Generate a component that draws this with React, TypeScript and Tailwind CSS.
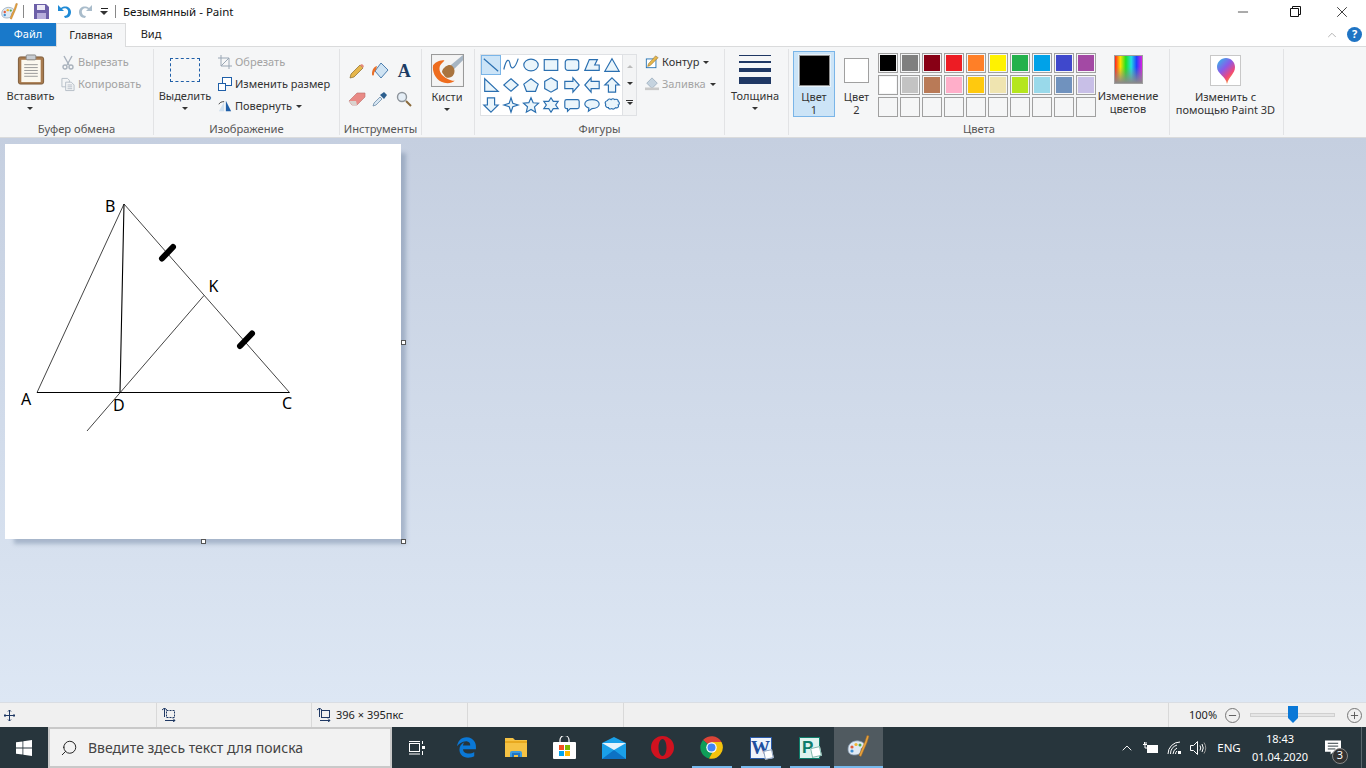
import React from 'react';
import { FaEdgeLegacy } from 'react-icons/fa6';
import { ChevronUp, Minus, Plus, Search, X } from 'lucide-react';

const Caret = ({ className = '' }: { className?: string }) => (
  <span className={`inline-block h-0 w-0 border-x-[3px] border-t-[3px] border-x-transparent border-t-[#333] ${className}`} />
);

const Group = ({ width, label, children }: { width: string; label?: string; children: React.ReactNode }) => (
  <div className={`flex shrink-0 flex-col border-r border-[#e2e3e5] ${width}`}>
    <div className="flex min-h-0 flex-1">{children}</div>
    <div className="h-[17px] text-center text-[11.2px] leading-[22px] text-[#555]">{label}</div>
  </div>
);

const SmallBtn = ({ icon, text, disabled, caret }: { icon: React.ReactNode; text: string; disabled?: boolean; caret?: boolean }) => (
  <div className={`flex h-[22px] items-center gap-[3px] whitespace-nowrap text-[11px] ${disabled ? 'text-[#a3a3a3]' : 'text-[#333]'}`}>
    <span className="flex w-[14px] justify-center">{icon}</span>
    {text}
    {caret && <Caret className="ml-[1px]" />}
  </div>
);

const LargeBtn = ({ lines, caret = true, className = '' }: { lines: string[]; caret?: boolean; className?: string }) => (
  <div className={`flex flex-col items-center text-center text-[11px] leading-[13px] text-[#333] ${className}`}>
    {lines.map(l => (
      <span key={l} className="whitespace-nowrap">{l}</span>
    ))}
    {caret && <Caret className="mt-[5px]" />}
  </div>
);

const PaintIcon = ({ size = 18 }: { size?: number }) => (
  <svg width={size} height={size} viewBox="0 0 24 24">
    <path d="M1 14c0-6 6-9 11-8 5 1 7 4 5 6-2 1-3 1-3 3s-1 5-6 5-7-2-7-6z" fill="#dfe9f3" stroke="#7d93a8" strokeWidth="0.8" />
    <circle cx="5" cy="12" r="1.6" fill="#e25b3c" />
    <circle cx="9" cy="9.5" r="1.6" fill="#f2b632" />
    <circle cx="13" cy="10" r="1.5" fill="#4fa84a" />
    <circle cx="5" cy="16" r="1.6" fill="#3f8fd2" />
    <path d="M22 1l-2-.5-2 6-6 14 2 1 6-14z" fill="#e7a33d" stroke="#a8681e" strokeWidth="0.5" />
  </svg>
);

const shapes: React.ReactNode[] = [
  <path d="M2 3l16 14" />,
  <path d="M2 15C5 2 8 3 9 9s5 7 9-6" fill="none" />,
  <ellipse cx="10" cy="10" rx="8" ry="6.5" />,
  <rect x="2.5" y="4" width="15" height="12" />,
  <rect x="2.5" y="4" width="15" height="12" rx="3" />,
  <path d="M7 4h9l-3 6h5v6H2z" />,
  <path d="M10 3l8 14H2z" />,
  <path d="M3 3l15 14H3z" />,
  <path d="M10 3l8 7-8 7-8-7z" />,
  <path d="M10 3l8 6-3 8H5L2 9z" />,
  <path d="M10 2l7 4v8l-7 4-7-4V6z" />,
  <path d="M2 6h9V2l7 8-7 8v-4H2z" />,
  <path d="M18 6H9V2l-7 8 7 8v-4h9z" />,
  <path d="M10 2l8 8h-4v8H6v-8H2z" />,
  <path d="M10 18l8-8h-4V2H6v8H2z" />,
  <path d="M10 2l2 6 6 2-6 2-2 6-2-6-6-2 6-2z" />,
  <path d="M10 2l2.4 5.5 6 .6-4.5 4 1.3 6L10 15l-5.2 3 1.3-6-4.5-4 6-.6z" />,
  <path d="M10 2l2.5 4H18l-2.8 4 2.8 4h-5.5L10 18l-2.5-4H2l2.8-4L2 6h5.5z" />,
  <path d="M4 4h12a2 2 0 012 2v6a2 2 0 01-2 2H8l-3 3v-3H4a2 2 0 01-2-2V6a2 2 0 012-2z" />,
  <path d="M10 4c4.5 0 8 2 8 5s-3.5 5-8 5l-4 3 .5-3.5C4 12.5 2 11 2 9c0-3 3.5-5 8-5z" />,
  <path d="M5 5c1-2 3-2 4-1 1-1 3-1 4 0 2-1 4 0 4 2 2 1 1 4 0 4 1 2-1 4-3 3-1 1-3 2-4 1-2 1-4 0-4-1-2 0-4-2-3-4-1-1-1-3 2-4z" />,
];

const colors = [
  ['#000000', '#7f7f7f', '#880015', '#ed1c24', '#ff7f27', '#fff200', '#22b14c', '#00a2e8', '#3f48cc', '#a349a4'],
  ['#ffffff', '#c3c3c3', '#b97a57', '#ffaec9', '#ffc90e', '#efe4b0', '#b5e61d', '#99d9ea', '#7092be', '#c8bfe7'],
  Array(10).fill('#f5f6f7'),
];

const TitleBar = () => (
  <div className="flex h-[23px] items-center bg-white pl-[1px] text-[11.5px] text-[#111]">
    <PaintIcon />
    <span className="ml-[4px] h-[13px] w-px bg-[#888]" />
    <svg className="ml-[10px]" width="15" height="15" viewBox="0 0 15 15">
      <path d="M0 0h12l3 3v12H0z" fill="#6c5fa8" />
      <rect x="3" y="1" width="8" height="5" fill="#ece9f6" />
      <rect x="3" y="9" width="9" height="6" fill="#b7aedb" />
    </svg>
    <svg className="ml-[8px]" width="15" height="15" viewBox="0 0 15 15">
      <path d="M1 1v6h6L5 5c3-2 7 0 6 4-.4 2-2 3-4 3l1 2c4 0 6-3 6-6 0-5-6-7-10-4z" fill="#1f8ad6" />
    </svg>
    <svg className="ml-[6px]" width="15" height="15" viewBox="0 0 15 15">
      <path d="M14 1v6H8l2-2c-3-2-7 0-6 4 .4 2 2 3 4 3l-1 2c-4 0-6-3-6-6 0-5 6-7 10-4z" fill="#a9bccb" />
    </svg>
    <span className="ml-[7px] flex flex-col items-center gap-[2px]">
      <span className="h-px w-[7px] bg-[#222]" />
      <Caret className="border-x-[4px] border-t-[4px] border-t-[#222]" />
    </span>
    <span className="ml-[7px] h-[13px] w-px bg-[#888]" />
    <span className="ml-[7px] pt-[1px]">Безымянный - Paint</span>
    <div className="ml-auto flex items-center">
      <Minus size={16} strokeWidth={1} className="mr-[39px] text-black" />
      <svg className="mr-[32px]" width="11" height="11" viewBox="0 0 11 11" fill="none" stroke="#111">
        <path d="M.5 2.5h8v8h-8zM2.5 2.5v-2h8v8h-2" />
      </svg>
      <X size={18} strokeWidth={1} className="mr-[15px] text-black" />
    </div>
  </div>
);

const Tabs = () => (
  <div className="relative flex h-[23px] items-stretch bg-white text-[11px]">
    <div className="flex w-[56px] items-center justify-center bg-[#1979ca] text-white">Файл</div>
    <div className="z-10 -mb-px flex w-[70px] items-center justify-center border-x border-t border-[#dadbdc] bg-[#f5f6f7] text-[#222]">Главная</div>
    <div className="flex w-[50px] items-center justify-center text-[#222]">Вид</div>
    <div className="ml-auto flex items-center">
      <ChevronUp size={14} strokeWidth={1.5} className="mr-[8px] text-[#a8a8a8]" />
      <span className="mr-[4px] flex h-[15px] w-[15px] items-center justify-center rounded-full bg-[#1f74c4] text-[11px] font-bold text-white">?</span>
    </div>
  </div>
);

const Ribbon = () => (
  <div className="flex h-[92px] border-y border-[#dadbdc] bg-[#f5f6f7] py-[2px]">
    <Group width="w-[154px]" label="Буфер обмена">
      <div className="flex w-[61px] flex-col items-center pt-[5px]">
        <svg width="28" height="31" viewBox="0 0 28 32">
          <rect x="1" y="3" width="26" height="28" rx="2" fill="#a87b4f" stroke="#7d5a38" />
          <rect x="4" y="6" width="20" height="23" fill="#fbf8ef" />
          <path d="M7 11h14M7 14h14M7 17h14M7 20h14M7 23h14" stroke="#999" />
          <rect x="9" y="1" width="10" height="5" rx="1" fill="#c7ccd2" stroke="#888" />
        </svg>
        <LargeBtn lines={['Вставить']} className="mt-[4px]" />
      </div>
      <div className="pt-[2px]">
        <SmallBtn
          disabled
          text="Вырезать"
          icon={
            <svg width="12" height="15" viewBox="0 0 12 15" fill="none" stroke="#a9b2bd" strokeWidth="1.4">
              <path d="M2 1l5 9M10 1L5 10" />
              <circle cx="3" cy="12" r="2" />
              <circle cx="9" cy="12" r="2" />
            </svg>
          }
        />
        <SmallBtn
          disabled
          text="Копировать"
          icon={
            <svg width="15" height="15" viewBox="0 0 15 15" fill="#f4f5f6" stroke="#b4bcc6">
              <path d="M1 1h6l2 2v7H1z" />
              <path d="M5 5h6l3 3v6H5z" />
              <path d="M7 8h5M7 10h5M7 12h5" />
            </svg>
          }
        />
      </div>
    </Group>
    <Group width="w-[186px]" label="Изображение">
      <div className="flex w-[62px] flex-col items-center pt-[9px]">
        <div className="h-[24px] w-[30px] border border-dashed border-[#1f5fa8]" />
        <LargeBtn lines={['Выделить']} className="mt-[7px]" />
      </div>
      <div className="pl-[2px] pt-[2px]">
        <SmallBtn
          disabled
          text="Обрезать"
          icon={
            <svg width="14" height="14" viewBox="0 0 14 14" fill="none" stroke="#9aa7b5">
              <path d="M3 0v11h11M0 3h11v11M3 11L11 3" />
            </svg>
          }
        />
        <SmallBtn
          text="Изменить размер"
          icon={
            <svg width="14" height="14" viewBox="0 0 14 14" fill="#fff" stroke="#1f5fa8">
              <rect x="4.5" y=".5" width="9" height="8" />
              <rect x=".5" y="6.5" width="7" height="7" />
            </svg>
          }
        />
        <SmallBtn
          caret
          text="Повернуть"
          icon={
            <svg width="16" height="14" viewBox="0 0 16 14">
              <path d="M9 1l6 12H9z" fill="#1f5fa8" />
              <path d="M1 13L7 2v11z" fill="#cfe0ef" />
              <path d="M1 5c1-2 3-3 6-3" fill="none" stroke="#333" />
            </svg>
          }
        />
      </div>
    </Group>
    <Group width="w-[82px]" label="Инструменты">
      <div className="grid w-full auto-rows-[28px] grid-cols-3 place-items-center px-[5px] pt-[8px]">
        <svg width="16" height="16" viewBox="0 0 16 16">
          <path d="M1 15l1-4L11 2l3 3-9 9z" fill="#e6b64b" stroke="#8a6a2a" strokeWidth=".7" />
          <path d="M11 2l2-1 2 2-1 2z" fill="#e58a7b" />
        </svg>
        <svg width="18" height="18" viewBox="0 0 18 18">
          <path d="M10 1l7 7-7 8-6-7z" fill="#cfe3f3" stroke="#4d7fb0" />
          <path d="M6 4C2 5 1 9 1 12c0 2 2 2 2 0 0-2 1-3 2-4z" fill="#e8702a" />
        </svg>
        <span className="font-['Liberation_Serif',serif] text-[18px] font-bold leading-none text-[#1c3c64]">A</span>
        <svg width="18" height="14" viewBox="0 0 18 14">
          <path d="M1 9l8-8h8v4l-8 8H4z" fill="#e98a86" stroke="#b96b68" strokeWidth=".6" />
          <path d="M1 9h7l1 4H4z" fill="#d9d3cf" />
        </svg>
        <svg width="16" height="16" viewBox="0 0 16 16">
          <path d="M1 15l1-3 6-6 2 2-6 6z" fill="#d7e6f3" stroke="#5c7f9f" strokeWidth=".7" />
          <path d="M8 4l4-3 3 3-3 4z" fill="#2d5f8e" />
        </svg>
        <svg width="16" height="16" viewBox="0 0 16 16" fill="none">
          <circle cx="6" cy="6" r="4.5" fill="#e5eef6" stroke="#8d949b" strokeWidth="1.4" />
          <path d="M10 10l5 5" stroke="#8a6a3a" strokeWidth="2" />
        </svg>
      </div>
    </Group>
    <Group width="w-[53px]">
      <div className="flex w-full flex-col items-center pr-[2px] pt-[5px]">
        <svg width="33" height="33" viewBox="0 0 32 32">
          <rect x=".5" y=".5" width="31" height="31" fill="#f4f4f4" stroke="#9a9a9a" />
          <path d="M2 11c3-4 7-5 11-5-1 2-3 3-4 5-2 4 0 9 5 12 3 2 6 3 9 3-3 3-9 3-13 1-6-3-9-10-8-16z" fill="#ee6c1e" />
          <path d="M31 1L19 11l3 4 9-9z" fill="#a6b5c3" />
          <path d="M11 16c2-4 7-7 10-4s2 8-1 10-6 1-7-1-3-3-2-5z" fill="#a9743e" />
        </svg>
        <LargeBtn lines={['Кисти']} className="mt-[3px]" />
      </div>
    </Group>
    <Group width="w-[250px]" label="Фигуры">
      <div className="flex items-start pl-[5px] pt-[5px]">
        <div className="flex border border-[#dfe1e4] bg-white">
          <div className="grid w-[141px] grid-cols-7">
            {shapes.map((s, i) => (
              <div key={i} className={`flex h-[20px] w-[20px] items-center justify-center ${i === 0 ? 'border border-[#7ab5e8] bg-[#cce4f7]' : ''}`}>
                <svg width="18" height="18" viewBox="0 0 20 20" fill="#eaf5fb" stroke="#2a6fb0" strokeWidth="1.3">
                  {s}
                </svg>
              </div>
            ))}
          </div>
          <div className="flex w-[14px] flex-col items-center justify-around border-l border-[#dfe1e4] bg-[#f3f4f5] py-[3px]">
            <Caret className="rotate-180 border-t-[#bbb]" />
            <Caret />
            <span className="flex flex-col items-center gap-[1px]">
              <span className="h-px w-[7px] bg-[#333]" />
              <Caret />
            </span>
          </div>
        </div>
        <div className="-mt-[3px] ml-[8px]">
          <SmallBtn
            caret
            text="Контур"
            icon={
              <svg width="16" height="16" viewBox="0 0 16 16">
                <rect x="1.5" y="4.5" width="11" height="10" fill="#fff" stroke="#1f6eb0" />
                <path d="M3 13l1-3 8-9 3 2-9 9z" fill="#e6b64b" stroke="#8a6a2a" strokeWidth=".6" />
              </svg>
            }
          />
          <SmallBtn
            disabled
            caret
            text="Заливка"
            icon={
              <svg width="16" height="16" viewBox="0 0 16 16">
                <path d="M8 1l6 6-6 6-6-6z" fill="#c5d3df" stroke="#9fb0c0" />
                <rect x="0" y="12" width="16" height="3" fill="#c9c9c9" />
              </svg>
            }
          />
        </div>
      </div>
    </Group>
    <Group width="w-[64px]">
      <div className="flex w-full flex-col items-center pr-[3px] pt-[6px]">
        <div className="flex w-[32px] flex-col gap-[5px]">
          <span className="h-px bg-[#1f3864]" />
          <span className="h-[2px] bg-[#1f3864]" />
          <span className="h-[4px] bg-[#1f3864]" />
          <span className="h-[7px] bg-[#1f3864]" />
        </div>
        <LargeBtn lines={['Толщина']} className="mt-[5px]" />
      </div>
    </Group>
    <Group width="w-[381px]" label="Цвета">
      <div className="flex w-full items-start pl-[4px] pt-[2px]">
        <div className="flex h-[66px] w-[42px] flex-col items-center border border-[#7ab5e8] bg-[#cce4f7] pt-[3px]">
          <span className="h-[31px] w-[31px] border border-[#8f8f8f] bg-black outline outline-1 outline-[#ffffff80]" />
          <LargeBtn caret={false} lines={['Цвет', '1']} className="mt-[4px]" />
        </div>
        <div className="flex w-[43px] flex-col items-center pt-[7px]">
          <span className="h-[25px] w-[25px] border border-[#a0a0a0] bg-white" />
          <LargeBtn caret={false} lines={['Цвет', '2']} className="mt-[7px]" />
        </div>
        <div className="flex flex-col gap-[2px] pt-[2px]">
          {colors.map((row, r) => (
            <div key={r} className="flex gap-[2px]">
              {row.map((c, i) => (
                <span key={i} className="h-[20px] w-[20px] border border-[#a0a0a0] p-px">
                  <span className="block h-full w-full" style={{ background: c }} />
                </span>
              ))}
            </div>
          ))}
        </div>
        <div className="ml-[2px] flex w-[60px] flex-col items-center pt-[4px]">
          <span className="h-[29px] w-[29px] border border-[#a0a0a0] bg-[linear-gradient(to_bottom,#ffffff00,#ffffff00_40%,#8a8a8a),linear-gradient(to_right,#ff2020,#ffe000,#20e020,#20e0e0,#2040ff,#e020e0)]" />
          <LargeBtn caret={false} lines={['Изменение', 'цветов']} className="mt-[5px]" />
        </div>
      </div>
    </Group>
    <Group width="w-[114px]">
      <div className="flex w-full flex-col items-center pr-[2px] pt-[6px]">
        <span className="flex h-[31px] w-[31px] items-center justify-center border border-[#c8c8c8] bg-white">
          <svg width="18" height="26" viewBox="0 0 18 26">
            <defs>
              <linearGradient id="p3d" x1="0" y1="0" x2="0.7" y2="1">
                <stop offset="0" stopColor="#28c4e8" />
                <stop offset=".45" stopColor="#8a5ae8" />
                <stop offset=".75" stopColor="#f0487a" />
                <stop offset="1" stopColor="#f8a020" />
              </linearGradient>
            </defs>
            <path d="M9 0c5 0 9 4 9 9 0 7-6 9-8 17-1-8-10-10-10-17 0-5 4-9 9-9z" fill="url(#p3d)" />
          </svg>
        </span>
        <LargeBtn caret={false} lines={['Изменить с', 'помощью Paint 3D']} className="mt-[4px]" />
      </div>
    </Group>
  </div>
);

const Handle = ({ className }: { className: string }) => (
  <span className={`absolute h-[5px] w-[5px] border border-[#555] bg-white ${className}`} />
);

const Drawing = () => (
  <svg width="396" height="395" viewBox="5 144 396 395" className="block font-['Noto_Sans',sans-serif]">
    <g fill="none" stroke="#444" strokeWidth="1">
      <path d="M124 204L37 392.5" />
      <path d="M124 204L289.5 392.5" />
      <path d="M204 295.5L87 431" />
    </g>
    <path d="M37 392.5H289.5M124 204L120 392.5" fill="none" stroke="#000" strokeWidth="1.1" />
    <path d="M162 258.5L173 247M240 346L252 333.5" stroke="#000" strokeWidth="6" strokeLinecap="round" />
    <g fontSize="16" fill="#000">
      <text x="105" y="212">B</text>
      <text x="208.5" y="292">K</text>
      <text x="21" y="405">A</text>
      <text x="113" y="411">D</text>
      <text x="282" y="409">C</text>
    </g>
  </svg>
);

const StatusBar = () => (
  <div className="flex h-[25px] border-t border-[#d9dde3] bg-[#f0f0f0] text-[11px] text-[#222]">
    <div className="flex w-[157px] items-center border-r border-[#d9d9d9] pl-[4px]">
      <svg width="11" height="11" viewBox="0 0 11 11" fill="none" stroke="#1f3864">
        <path d="M5.5 0v11M0 5.5h11M4 1.5L5.5 0 7 1.5M4 9.5L5.5 11 7 9.5M1.5 4L0 5.5 1.5 7M9.5 4L11 5.5 9.5 7" />
      </svg>
    </div>
    <div className="flex w-[155px] items-center border-r border-[#d9d9d9] pl-[5px]">
      <svg width="14" height="14" viewBox="0 0 14 14" fill="none" stroke="#1f3864">
        <path d="M2.5 0v9M0 2l2.5-2L5 2" />
        <rect x="4.5" y="2.5" width="8" height="7" strokeDasharray="2 1" />
        <path d="M3 12.5h10M11 10.5l2 2-2 1.5" />
      </svg>
    </div>
    <div className="flex w-[156px] items-center gap-[5px] border-r border-[#d9d9d9] pl-[5px]">
      <svg width="14" height="14" viewBox="0 0 14 14" fill="none" stroke="#1f3864">
        <path d="M2.5 0v9M0 2l2.5-2L5 2" />
        <rect x="4.5" y="2.5" width="8" height="7" />
        <path d="M3 12.5h10M11 10.5l2 2-2 1.5" />
      </svg>
      396 × 395пкс
    </div>
    <div className="w-[156px] border-r border-[#d9d9d9]" />
    <div className="w-[545px] border-r border-[#d9d9d9]" />
    <div className="flex flex-1 items-center">
      <span className="ml-[20px] w-[28px]">100%</span>
      <span className="ml-[8px] flex h-[15px] w-[15px] items-center justify-center rounded-full border border-[#777]">
        <Minus size={11} strokeWidth={2} className="text-[#555]" />
      </span>
      <span className="relative ml-[10px] h-[4px] w-[85px] border border-[#d0d0d0] bg-[#e6e6e6]">
        <span className="absolute left-[37px] top-[-8px] h-[17px] w-[10px] bg-[#0a78d7] [clip-path:polygon(0_0,100%_0,100%_70%,50%_100%,0_70%)]" />
      </span>
      <span className="ml-[12px] flex h-[15px] w-[15px] items-center justify-center rounded-full border border-[#777]">
        <Plus size={11} strokeWidth={2} className="text-[#555]" />
      </span>
    </div>
  </div>
);

const TaskIcon = ({ children, open }: { children: React.ReactNode; open?: boolean }) => (
  <div className="relative flex w-[49px] items-center justify-center">
    {children}
    {open && <span className="absolute bottom-0 left-[5px] right-[4px] h-[2px] bg-[#76b9ed]" />}
  </div>
);

const Taskbar = () => (
  <div className="flex h-[41px] bg-[#27353c] text-white">
    <div className="flex w-[48px] items-center justify-center">
      <svg width="16" height="16" viewBox="0 0 16 16" fill="#fff">
        <path d="M0 2.3l6.5-.9v6.2H0zM7.3 1.3L16 0v7.6H7.3zM0 8.4h6.5v6.2L0 13.700zM7.3 8.4H16V16l-8.7-1.2z" />
      </svg>
    </div>
    <div className="flex w-[344px] items-center border-2 border-[#c9c9c9] bg-[#f2f2f2] pl-[10px] text-[14px] text-[#444]">
      <Search size={18} strokeWidth={1.3} className="-scale-x-100 text-[#222]" />
      <span className="ml-[10px]">Введите здесь текст для поиска</span>
    </div>
    <TaskIcon>
      <svg width="16" height="14" viewBox="0 0 16 14" fill="none" stroke="#fff">
        <rect x=".5" y="2.5" width="10" height="8" />
        <path d="M0 .5h11M0 13h11M13.5 0v3M13.5 10v4" />
        <rect x="13" y="5" width="3" height="3" fill="#fff" stroke="none" />
      </svg>
    </TaskIcon>
    <div className="ml-[1px] flex">
      <TaskIcon>
        <FaEdgeLegacy size={21} className="text-[#0a78d7]" />
      </TaskIcon>
      <TaskIcon>
        <svg width="22" height="19" viewBox="0 0 22 19">
          <path d="M0 0h8l2 2h12v17H0z" fill="#f5c244" />
          <path d="M0 3h22v2H0z" fill="#e8a91f" />
          <path d="M7 19v-5h8v5h-2v-2H9v2z" fill="#1f74c4" />
          <path d="M5 19v-4q0-2 2-2h8q2 0 2 2v4h-2v-4H7v4z" fill="#3c9be0" />
        </svg>
      </TaskIcon>
      <TaskIcon>
        <svg width="23" height="23" viewBox="0 0 23 23">
          <path d="M7 6V4a4 4 0 019 0v2" fill="none" stroke="#fff" strokeWidth="1.2" />
          <rect y="6" width="23" height="17" rx="1" fill="#fff" />
          <rect x="6" y="9" width="5" height="5" fill="#f25022" />
          <rect x="12" y="9" width="5" height="5" fill="#7fba00" />
          <rect x="6" y="15" width="5" height="5" fill="#00a4ef" />
          <rect x="12" y="15" width="5" height="5" fill="#ffb900" />
        </svg>
      </TaskIcon>
      <TaskIcon>
        <svg width="24" height="22" viewBox="0 0 24 22">
          <path d="M0 6l12-6 12 6v16H0z" fill="#1aa0e8" />
          <path d="M0 6h24L12 13z" fill="#e6f3fb" />
          <path d="M0 22L12 13l12 9z" fill="#0d72c4" />
        </svg>
      </TaskIcon>
      <TaskIcon>
        <svg width="23" height="23" viewBox="0 0 23 23" fillRule="evenodd">
          <path d="M11.5 0a11.5 11.5 0 100 23 11.5 11.5 0 000-23zm0 3c2.3 0 4 3.7 4 8.5s-1.7 8.500-4 8.500-4-3.700-4-8.500 1.700-8.500 4-8.500z" fill="#d0121f" />
        </svg>
      </TaskIcon>
      <TaskIcon open>
        <svg width="23" height="23" viewBox="0 0 46 46">
          <path d="M23 23L6 8A23 23 0 0143 12H23z" fill="#db4437" />
          <path d="M6 8a23 23 0 0012 37l10-18z" fill="#0f9d58" />
          <path d="M43 12a23 23 0 01-25 33l10-18-5-15z" fill="#f4c20d" />
          <circle cx="23" cy="23" r="10.5" fill="#fff" />
          <circle cx="23" cy="23" r="8" fill="#4285f4" />
        </svg>
      </TaskIcon>
      <TaskIcon open>
        <span className="relative flex h-[22px] w-[22px] items-center justify-center border border-[#2a5aa8] bg-[#eef3fb] font-['Liberation_Serif',serif] text-[19px] font-bold leading-none text-[#1f4fa0]">
          W
          <span className="absolute -bottom-px -right-[2px] h-[9px] w-[9px] -rotate-12 border border-[#8aa0c0] bg-white" />
        </span>
      </TaskIcon>
      <TaskIcon open>
        <span className="relative flex h-[22px] w-[21px] items-center justify-start border border-[#0e7d6b] bg-[#dff3ee] pl-[2px] font-['Liberation_Sans',sans-serif] text-[17px] font-bold leading-none text-[#0e7d6b]">
          P
          <span className="absolute bottom-[1px] -right-[2px] h-[10px] w-[10px] -rotate-12 border border-[#7fb8ac] bg-white" />
        </span>
      </TaskIcon>
      <div className="flex w-[49px] items-center justify-center border-b-2 border-[#76b9ed] bg-[#505a60]">
        <PaintIcon size={24} />
      </div>
    </div>
    <div className="flex-1" />
    <div className="flex items-center text-[11.5px]">
      <div className="flex w-[24px] justify-center">
        <ChevronUp size={16} strokeWidth={1.4} />
      </div>
      <div className="flex w-[23px] justify-center">
        <svg width="16" height="12" viewBox="0 0 16 12" fill="none" stroke="#fff">
          <rect x="4.5" y="3.5" width="10" height="7" />
          <rect x="5" y="4" width="9" height="6" fill="#fff" stroke="none" />
          <path d="M0 2.5h4M1.5 0v2.5M3 0v2.5M2 3v3h2" />
        </svg>
      </div>
      <div className="flex w-[25px] justify-center">
        <svg width="15" height="14" viewBox="0 0 15 14" fill="none" stroke="#fff">
          <path d="M1 13A12 12 0 0113 1M3.5 13A9.5 9.5 0 0110 4M6 13a7 7 0 014-6M8.5 13a4 4 0 011.5-3" />
          <rect x="11" y="10" width="3" height="3" fill="#fff" stroke="none" />
        </svg>
      </div>
      <div className="flex w-[23px] justify-center">
        <svg width="17" height="14" viewBox="0 0 17 14" fill="none" stroke="#fff">
          <path d="M.5 4.5h3l4-4v13l-4-4h-3z" />
          <path d="M10 4.5q1.5 2.5 0 5M12 3q2.5 4 0 8" />
          <path d="M14 1.5q3.5 5.5 0 11" stroke="#999" />
        </svg>
      </div>
      <span className="w-[38px] text-center">ENG</span>
      <div className="flex w-[64px] flex-col items-center pt-[1px] text-[11px] leading-[18px]">
        <span>18:43</span>
        <span>01.04.2020</span>
      </div>
      <div className="relative flex w-[49px] justify-center pr-[7px]">
        <svg width="16" height="16" viewBox="0 0 17 16">
          <path d="M0 0h17v12H9l-3 3v-3H0z" fill="#fff" />
          <path d="M3 3h11M3 6h11M3 9h8" stroke="#27353c" />
        </svg>
        <span className="absolute left-[20px] top-[8px] flex h-[16px] w-[16px] items-center justify-center rounded-full border border-[#888] bg-[#333] text-[11px]">3</span>
      </div>
      <span className="h-full w-[5px] border-l border-[#5a666c]" />
    </div>
  </div>
);

export default function App() {
  return (
    <div className="flex h-[768px] w-[1366px] flex-col overflow-hidden bg-white font-['Noto_Sans','Open_Sans',sans-serif]">
      <TitleBar />
      <Tabs />
      <Ribbon />
      <div className="min-h-0 flex-1 bg-gradient-to-b from-[#c5cfe0] to-[#dde7f4] pl-[5px] pt-[6px]">
        <div className="relative h-[395px] w-[396px] bg-white shadow-[7px_7px_4px_-2px_rgba(110,130,160,0.45)]">
          <Drawing />
          <Handle className="left-[196px] top-[395px]" />
          <Handle className="left-[396px] top-[395px]" />
          <Handle className="left-[396px] top-[196px]" />
        </div>
      </div>
      <StatusBar />
      <Taskbar />
    </div>
  );
}
